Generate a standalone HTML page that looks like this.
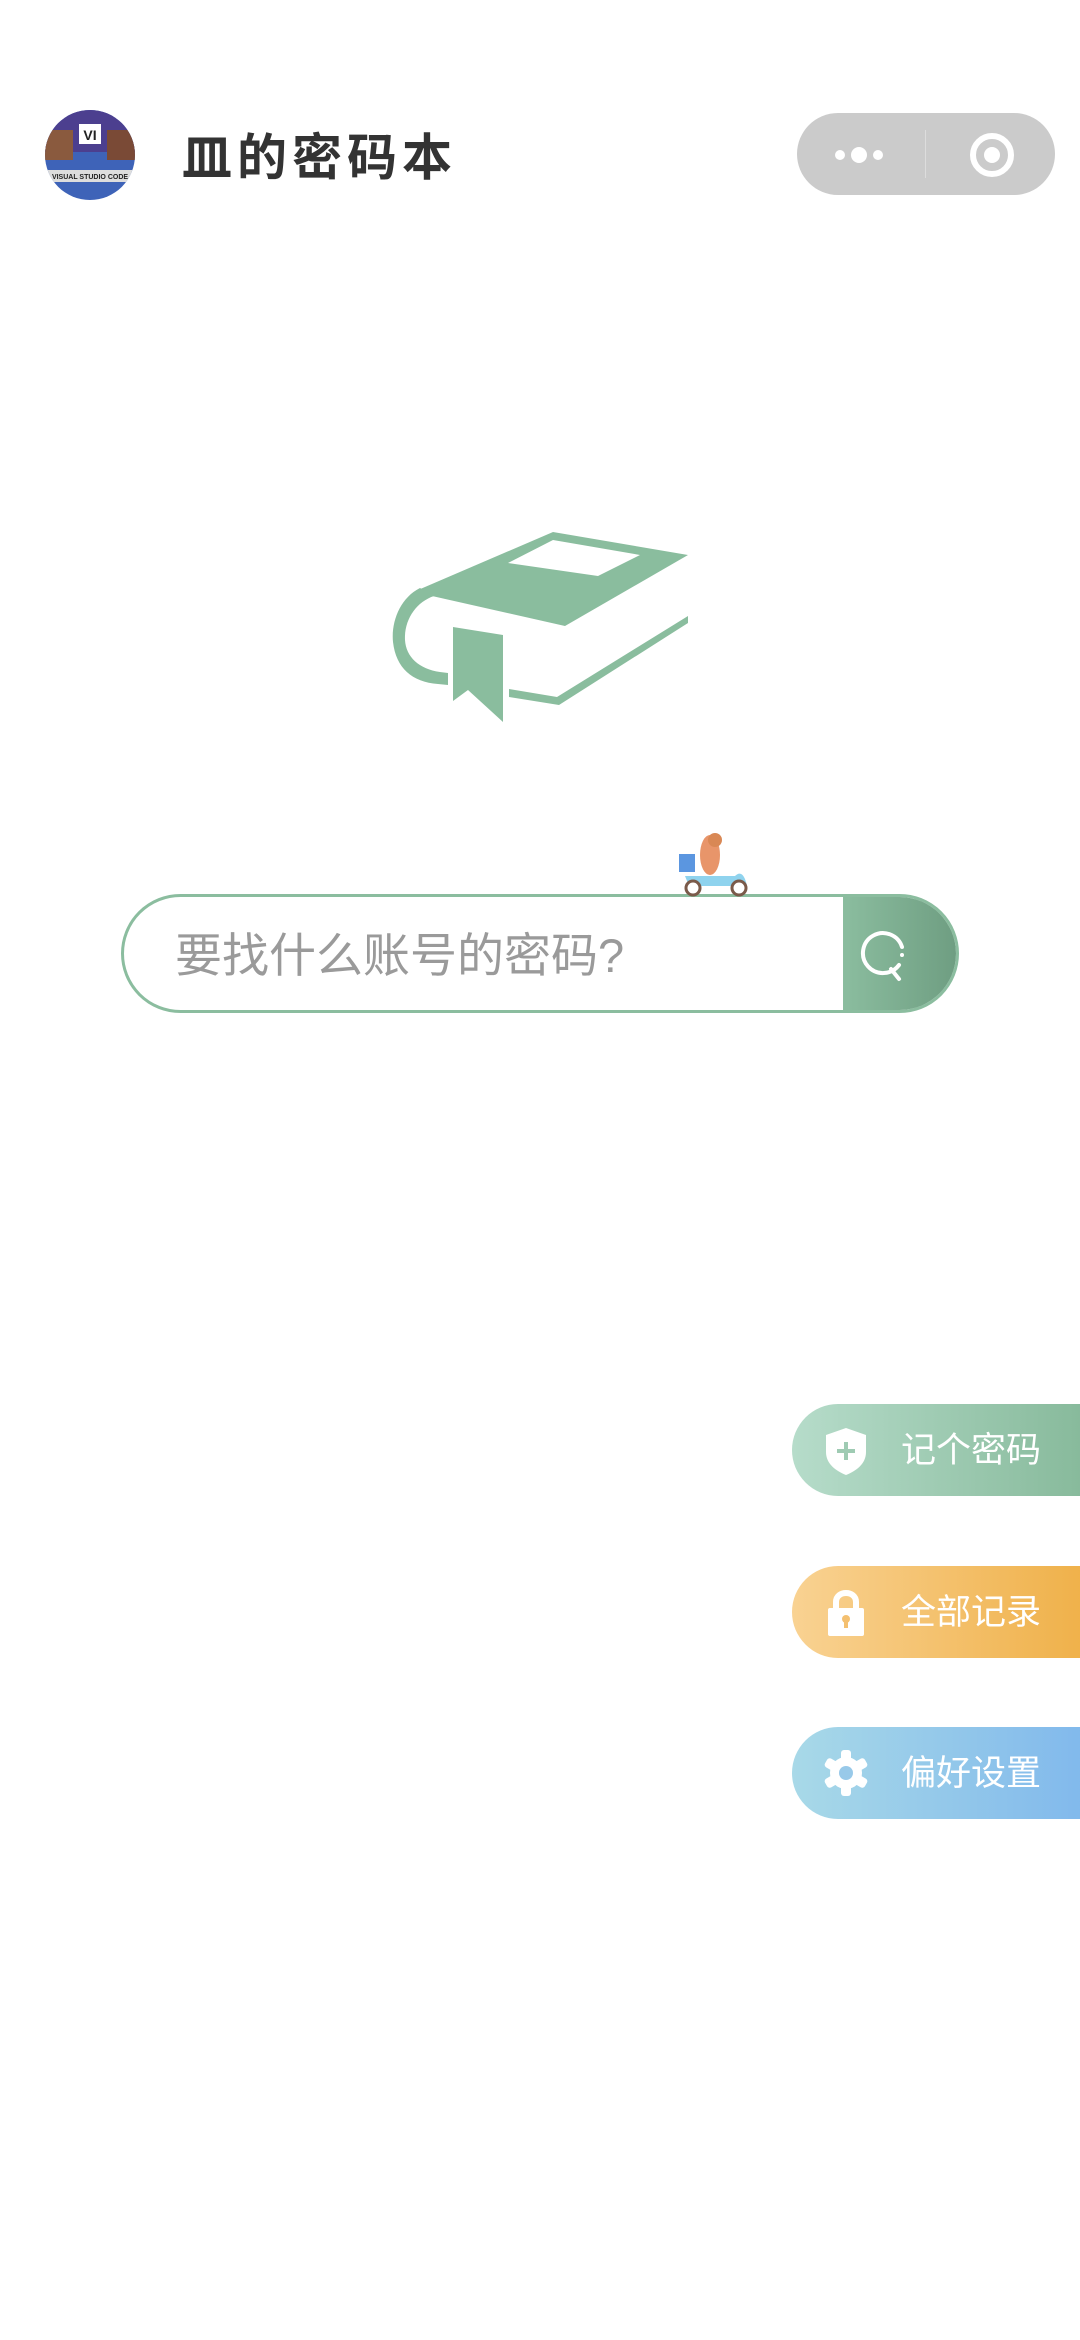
<!DOCTYPE html>
<html><head><meta charset="utf-8"><style>
html,body{margin:0;padding:0;background:#fff;width:1080px;height:2340px;overflow:hidden;position:relative;font-family:"Liberation Sans","Noto Sans CJK SC",sans-serif}
.abs{position:absolute}
.title{left:182px;top:127px;font-size:50px;font-weight:bold;color:#333;letter-spacing:5px;line-height:62px}
.cap{left:797px;top:113px;width:258px;height:82px;border-radius:41px;background:#cbcbcb}
.search{left:121px;top:894px;width:838px;height:119px;border:3px solid #8bbd9f;border-radius:62px;box-sizing:border-box;overflow:hidden;background:#fff}
.ph{left:175px;top:926px;font-size:47px;color:#9a9a9a;line-height:60px}
.btn{left:792px;width:300px;height:92px;border-radius:46px 0 0 46px}
.btn span{position:absolute;left:109px;top:24px;font-size:35px;color:#fff;line-height:46px}
</style></head><body>
<svg class="abs" style="left:45px;top:110px" width="90" height="90" viewBox="0 0 90 90">
<defs><clipPath id="c"><circle cx="45" cy="45" r="45"/></clipPath></defs>
<g clip-path="url(#c)"><rect width="90" height="90" fill="#3e63b8"/><rect y="0" width="90" height="42" fill="#4c3f8f"/><rect x="0" y="20" width="28" height="30" fill="#8a5a3e"/><rect x="62" y="20" width="28" height="30" fill="#7a4a36"/><rect x="34" y="14" width="22" height="20" fill="#fff"/><text x="45" y="30" font-size="14" font-weight="bold" text-anchor="middle" fill="#222">VI</text><rect x="0" y="60" width="90" height="12" fill="#ddd"/><text x="45" y="69" font-size="7" font-weight="bold" text-anchor="middle" fill="#222">VISUAL STUDIO CODE</text></g></svg>
<div class="abs title">皿的密码本</div>
<div class="abs cap"></div>
<div class="abs" style="left:925px;top:130px;width:1px;height:48px;background:#ddd"></div>
<svg class="abs" style="left:830px;top:125px" width="200" height="60">
<circle cx="10" cy="30" r="5" fill="#fff"/><circle cx="29" cy="30" r="8" fill="#fff"/><circle cx="48" cy="30" r="5" fill="#fff"/>
<circle cx="162" cy="30" r="19" fill="none" stroke="#fff" stroke-width="6"/><circle cx="162" cy="30" r="8" fill="#fff"/></svg>
<svg class="abs" style="left:0;top:0" width="1080" height="800">
<g fill="#8abd9e">
<path d="M418,590 L553,532 L688,555 L565,626 L432,596 Z"/>
<path d="M508,563 L553,540 L640,555 L598,576 Z" fill="#fff"/>
<path d="M420,588 C400,598 391,622 393,642 C396,668 412,682 438,684 L448,685 L448,673 L440,672 C419,669 406,657 405,640 C404,620 416,602 434,596 Z"/>
<path d="M453,627 L503,635 L503,722 L468,690 L453,701 Z"/>
<path d="M509,697 L509,689 L557,697 L688,616 L688,623 L559,705 Z"/>
</g></svg>
<div class="abs search"><div class="abs" style="left:719px;top:0;width:120px;height:119px;background:linear-gradient(90deg,#8bbd9f,#6d9c80)"></div></div>
<svg class="abs" style="left:855px;top:925px" width="60" height="60"><path d="M44,40 A20,20 0 1 1 47,22" fill="none" stroke="#fff" stroke-width="4" stroke-linecap="round"/><path d="M36,44 L44,54" stroke="#fff" stroke-width="4" stroke-linecap="round"/><circle cx="47" cy="30" r="2" fill="#fff"/></svg>
<div class="abs ph">要找什么账号的密码?</div>
<svg class="abs" style="left:675px;top:830px" width="80" height="68">
<rect x="4" y="24" width="16" height="18" fill="#5b96e0"/><path d="M10,46 L60,46 C66,40 70,46 72,56 L14,56 Z" fill="#8fd3ee"/><ellipse cx="35" cy="25" rx="10" ry="20" fill="#e8956a"/><circle cx="40" cy="10" r="7" fill="#d98855"/><circle cx="18" cy="58" r="7" fill="#fff" stroke="#7a5a4a" stroke-width="3"/><circle cx="64" cy="58" r="7" fill="#fff" stroke="#7a5a4a" stroke-width="3"/></svg>
<div class="abs btn" style="top:1404px;background:linear-gradient(90deg,#b6dcca,#86b99a)"><svg class="abs" style="left:30px;top:22px" width="48" height="50"><path d="M24,2 L44,9 L44,26 C44,38 34,45 24,49 C14,45 4,38 4,26 L4,9 Z" fill="#fff"/><path d="M24,16 V34 M15,25 H33" stroke="#9fcbb3" stroke-width="4"/></svg><span>记个密码</span></div>
<div class="abs btn" style="top:1566px;background:linear-gradient(90deg,#f9d292,#efb048)"><svg class="abs" style="left:30px;top:20px" width="48" height="52"><path d="M14,22 V16 C14,4 34,4 34,16 V22" fill="none" stroke="#fff" stroke-width="6"/><rect x="6" y="22" width="36" height="28" rx="2" fill="#fff"/><circle cx="24" cy="33" r="4" fill="#f4c070"/><rect x="22" y="34" width="4" height="8" fill="#f4c070"/></svg><span>全部记录</span></div>
<div class="abs btn" style="top:1727px;background:linear-gradient(90deg,#a8d9e8,#80b8ec)"><svg class="abs" style="left:30px;top:22px" width="48" height="48"><g fill="#fff" transform="translate(24,24)"><circle r="16"/><g id="t"><rect x="-5" y="-23" width="10" height="12" rx="3"/></g><use href="#t" transform="rotate(60)"/><use href="#t" transform="rotate(120)"/><use href="#t" transform="rotate(180)"/><use href="#t" transform="rotate(240)"/><use href="#t" transform="rotate(300)"/></g><circle cx="24" cy="24" r="7" fill="#98c9e9"/></svg><span>偏好设置</span></div>
</body></html>
